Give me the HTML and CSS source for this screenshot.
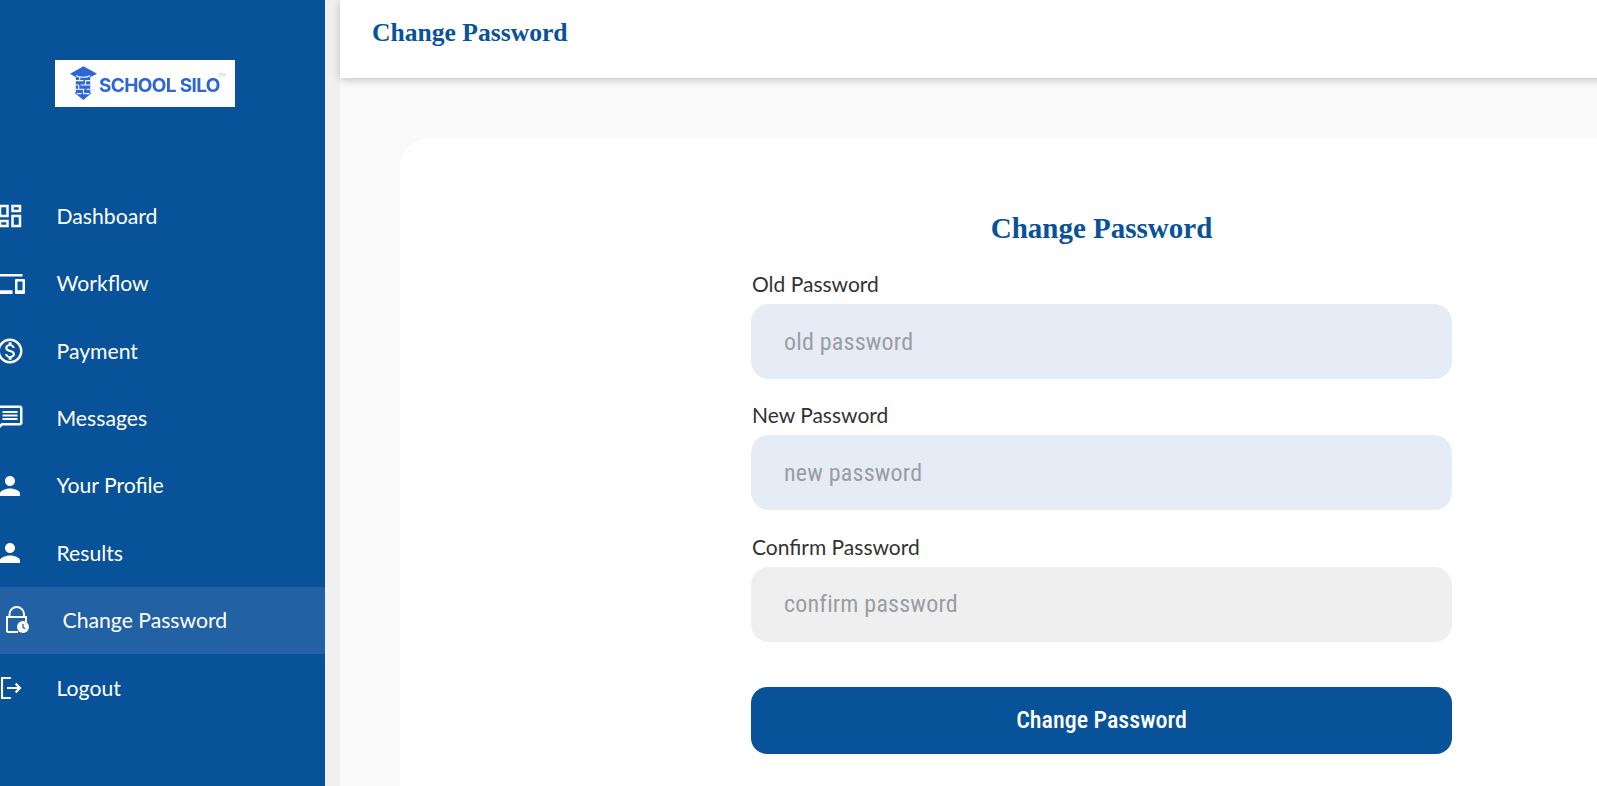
FILE: index.html
```html
<!DOCTYPE html>
<html lang="en">
<head>
<meta charset="utf-8">
<title>Change Password</title>
<link rel="stylesheet" href="styles.css">
</head>
<body>
<div class="app">
  <aside class="sidebar">
    <div class="logo">
      <svg class="logo-mark" viewBox="0 0 28 36"><path d="M14 0 28 8 21 11.500V27L22 28 14 35 5 28 6 27V11.500L0 8Z" fill="#2e66d8"/><path d="M6 10C10 12 17 12 21 10M6 15h8M16 15h5M6 19.500h3M11 19.500h10M6 24h9M17 24h4M7 28.500h5M14 28.500h6M10 11v4M16 15v4.500M9 19.500v4.500M14 24v4.500" stroke="#fff" stroke-width="1.100" fill="none"/></svg>
      <span class="logo-text">SCHOOL SILO</span>
      <span class="logo-tm">TM</span>
    </div>
    <nav class="nav">
      <a class="nav-item"><svg class="nav-icon" viewBox="0 0 24 24"><path d="M19 5v2h-4V5h4M9 5v6H5V5h4m10 8v6h-4v-6h4M9 17v2H5v-2h4M21 3h-8v6h8V3zM11 3H3v10h8V3zm10 8h-8v10h8V11zm-10 4H3v6h8v-6z"/></svg><span class="nav-label">Dashboard</span></a>
      <a class="nav-item"><svg class="nav-icon" viewBox="0 0 24 24"><path d="M4 6h18V4H4c-1.100 0-2 .9-2 2v11H0v3h14v-3H4V6zm19 2h-6c-.55 0-1 .45-1 1v10c0 .55.45 1 1 1h6c.55 0 1-.45 1-1V9c0-.55-.45-1-1-1zm-1 9h-4v-7h4v7z"/></svg><span class="nav-label">Workflow</span></a>
      <a class="nav-item"><svg class="nav-icon" viewBox="0 0 24 24"><path d="M12 2C6.480 2 2 6.480 2 12s4.480 10 10 10 10-4.480 10-10S17.520 2 12 2zm0 18c-4.410 0-8-3.590-8-8s3.590-8 8-8 8 3.590 8 8-3.590 8-8 8zm.31-8.860c-1.770-.45-2.340-.94-2.340-1.670 0-.84.79-1.430 2.100-1.430 1.380 0 1.900.66 1.940 1.640h1.710c-.05-1.340-.87-2.570-2.490-2.970V5H10.900v1.690c-1.510.32-2.720 1.300-2.720 2.810 0 1.790 1.490 2.690 3.660 3.210 1.950.46 2.340 1.150 2.340 1.870 0 .53-.39 1.390-2.100 1.390-1.600 0-2.230-.72-2.320-1.640H8.040c.1 1.700 1.360 2.660 2.860 2.970V19h2.340v-1.670c1.520-.29 2.720-1.160 2.730-2.770-.01-2.200-1.900-2.960-3.660-3.420z"/></svg><span class="nav-label">Payment</span></a>
      <a class="nav-item"><svg class="nav-icon" viewBox="0 0 24 24"><path d="M4 4h16v12H5.170L4 17.170V4m0-2c-1.100 0-1.990.9-1.990 2L2 22l4-4h14c1.100 0 2-.9 2-2V4c0-1.100-.9-2-2-2H4zm2 10h12v1.500H6V12zm0-2.800h12v1.500H6V9.200zm0-2.800h12v1.500H6V6.400z"/></svg><span class="nav-label">Messages</span></a>
      <a class="nav-item"><svg class="nav-icon" viewBox="0 0 24 24"><path d="M12 12c2.210 0 4-1.790 4-4s-1.790-4-4-4-4 1.790-4 4 1.790 4 4 4zm0 2c-2.670 0-8 1.340-8 4v2h16v-2c0-2.660-5.330-4-8-4z"/></svg><span class="nav-label">Your Profile</span></a>
      <a class="nav-item"><svg class="nav-icon" viewBox="0 0 24 24"><path d="M12 12c2.210 0 4-1.790 4-4s-1.790-4-4-4-4 1.790-4 4 1.790 4 4 4zm0 2c-2.670 0-8 1.340-8 4v2h16v-2c0-2.660-5.330-4-8-4z"/></svg><span class="nav-label">Results</span></a>
      <a class="nav-item is-active"><svg class="nav-icon" viewBox="0 0 30 30"><path d="M17 26H7.500A1.500 1.500 0 0 1 6 24.500V11H25V16M8.500 11V8.250a7.250 7.250 0 0 1 14.500 0V11" fill="none" stroke="#fff" stroke-width="2"/><circle cx="22" cy="21" r="6"/><path d="M22 18v3.400l2 1.400" fill="none" stroke="#2261a3" stroke-width="1.300"/></svg><span class="nav-label">Change Password</span></a>
      <a class="nav-item"><svg class="nav-icon nav-icon-line" viewBox="0 0 24 24"><path d="M12.800 4H5.600V20H12.800M9.600 12H20M16.500 8.500 20 12 16.500 15.500"/></svg><span class="nav-label">Logout</span></a>
    </nav>
  </aside>
  <div class="main">
    <header class="topbar"><h1 class="topbar-title">Change Password</h1></header>
    <section class="content">
      <div class="card">
        <form class="form">
          <h2 class="form-title">Change Password</h2>
          <label class="field"><span class="field-label">Old Password</span><input class="field-input" type="password" placeholder="old password"></label>
          <label class="field"><span class="field-label">New Password</span><input class="field-input" type="password" placeholder="new password"></label>
          <label class="field"><span class="field-label">Confirm Password</span><input class="field-input is-muted" type="password" placeholder="confirm password"></label>
          <button class="submit" type="button">Change Password</button>
        </form>
      </div>
    </section>
  </div>
</div>
</body>
</html>
```
FILE: styles.css
```css
* { box-sizing: border-box; }
html, body { margin: 0; height: 100%; overflow: hidden; }
body { background: #f0f0f0; font-family: "Lato", sans-serif; }
.app { display: flex; width: 1818px; height: 786px; }

.sidebar { flex: 0 0 325px; background: #085299; padding-top: 60px; overflow: hidden; }
.logo { display: flex; align-items: center; width: 180px; height: 47px; margin-left: 55px; padding-left: 15px; background: #fff; color: #2e66d8; position: relative; }
.logo-mark { width: 27px; height: 35px; flex: none; margin-right: 2px; filter: blur(.3px); }
.logo-text { font-family: "Inter", sans-serif; font-weight: 700; font-size: 19px; letter-spacing: -.65px; white-space: nowrap; margin-top: 3px; filter: blur(.3px); }
.logo-tm { position: absolute; left: 163px; top: 12px; font-size: 5px; color: #b9c9ee; }

.nav { margin-top: 75.6px; display: flex; flex-direction: column; }
.nav-item { display: flex; align-items: center; height: 67.4px; color: #fff; font-size: 21.2px; white-space: nowrap; }
.nav-label { padding-bottom: 1px; }
.nav-icon { width: 30px; height: 30px; flex: none; margin-left: -5px; margin-right: 31.5px; fill: #fff; }
.nav-icon-line { fill: none; stroke: #fff; stroke-width: 1.7; }
.is-active { background: #2261a3; padding-left: 6px; }

.main { flex: 1; margin-left: 15px; background: #fafafa; display: flex; flex-direction: column; }
.topbar { height: 78px; background: #fff; padding: 0 0 12px 32px; display: flex; align-items: center; box-shadow: 0 2px 8px rgba(0,0,0,.22); }
.topbar-title, .form-title { font-family: "Liberation Serif", serif; font-weight: 700; color: #085299; margin: 0; }
.topbar-title { font-size: 25.6px; }
.content { flex: 1; padding: 60px 15px 0 60px; }
.card { height: 100%; background: #fff; border-radius: 30px 30px 0 0; padding-top: 74px; display: flex; justify-content: center; }
.form { width: 701px; display: flex; flex-direction: column; }
.form-title { font-size: 29px; text-align: center; margin-bottom: 27px; }
.field { display: flex; flex-direction: column; margin-bottom: 24.4px; }
.field-label { font-size: 21px; line-height: 24px; color: #333; padding-left: 1px; margin-bottom: 8px; }
.field-input { height: 75px; border: 0; border-radius: 18px; background: #e6ecf5; padding: 0 33px; font-family: "Roboto", sans-serif; font-stretch: 75%; font-size: 24px; letter-spacing: .2px; outline: 0; }
.field-input::placeholder { color: #9a9da3; opacity: 1; }
.is-muted { background: #efefef; }
.submit { height: 67px; margin-top: 20.6px; border: 0; border-radius: 16px; background: #085299; color: #fff; font-family: "Roboto", sans-serif; font-stretch: 75%; font-weight: 500; font-size: 24px; }
```
